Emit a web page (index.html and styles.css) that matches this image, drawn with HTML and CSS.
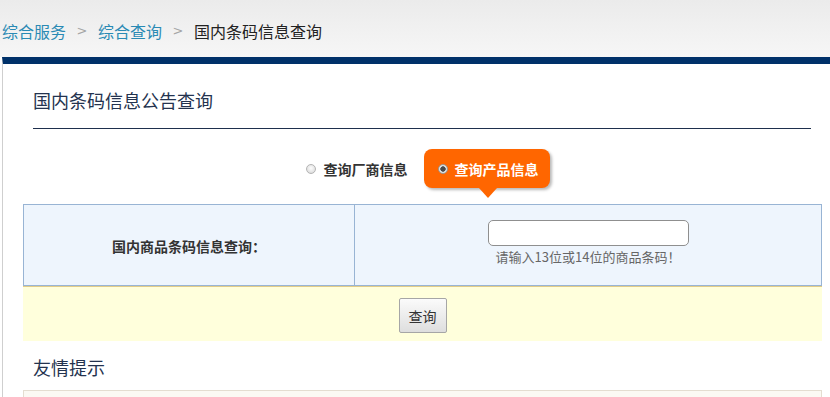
FILE: index.html
```html
<!DOCTYPE html>
<html lang="zh-CN">
<head>
<meta charset="utf-8">
<title>国内条码信息查询</title>
<link rel="stylesheet" href="styles.css">
</head>
<body>
<header class="header">
  <nav class="crumbs">
    <a class="crumb-link" href="#">综合服务</a><span class="sep">&gt;</span><a class="crumb-link" href="#">综合查询</a><span class="sep">&gt;</span><span class="crumb-cur">国内条码信息查询</span>
  </nav>
</header>
<main class="panel">
  <h1 class="title">国内条码信息公告查询</h1>
  <div class="modes">
    <label class="mode"><input class="radio" type="radio" name="mode"><span>查询厂商信息</span></label>
    <label class="mode mode-active"><input class="radio" type="radio" name="mode" checked><span>查询产品信息</span></label>
  </div>
  <div class="form">
    <div class="form-label">国内商品条码信息查询：</div>
    <div class="form-field">
      <input class="code-input" type="text">
      <div class="hint">请输入13位或14位的商品条码！</div>
    </div>
  </div>
  <div class="actions"><button class="btn" type="button">查询</button></div>
  <h2 class="tips-title">友情提示</h2>
  <div class="tips"></div>
</main>
</body>
</html>
```
FILE: styles.css
```css
html, body {
  margin: 0;
  padding: 0;
  overflow: hidden;
  background: #fff;
  font-family: "Noto Sans CJK SC", "Noto Sans", sans-serif;
  color: #333;
}

.header {
  height: 57px;
  background: linear-gradient(#ebebeb, #f6f6f6);
  box-sizing: border-box;
  padding-top: 19px;
}

.crumbs {
  display: flex;
  align-items: center;
  padding-left: 2px;
  height: 24px;
  font-size: 16px;
  line-height: 24px;
  white-space: nowrap;
}

.crumb-link {
  color: #2a8ab4;
  text-decoration: none;
}

.sep {
  display: inline-block;
  width: 32px;
  text-align: center;
  color: #a5a5a5;
  font-size: 13px;
  font-family: "DejaVu Sans", sans-serif;
}

.crumb-cur {
  color: #222;
}

.panel {
  margin-left: 2px;
  width: 860px;
  border-left: 1px solid #cfcfcf;
  border-top: 7px solid #003169;
  background: #fff;
  padding-bottom: 40px;
}

.title {
  margin: 24px 0 0 30px;
  width: 778px;
  padding-bottom: 16px;
  border-bottom: 1px solid #1e2f4d;
  font-size: 18px;
  line-height: 24px;
  font-weight: normal;
  color: #24334f;
}

.modes {
  margin: 20px 0 0 20px;
  width: 799px;
  box-sizing: border-box;
  padding-left: 10px;
  height: 39px;
  display: flex;
  justify-content: center;
  align-items: center;
  gap: 16px;
}

.mode {
  display: flex;
  align-items: center;
  gap: 8px;
  font-size: 14px;
  line-height: 20px;
  font-weight: bold;
  color: #333;
}

.radio {
  appearance: none;
  -webkit-appearance: none;
  margin: 0;
  width: 10px;
  height: 10px;
  border-radius: 50%;
  border: 1px solid #b4b4b4;
  background: radial-gradient(circle at 50% 40%, #fdfdfd, #d4d4d4);
  box-sizing: border-box;
}

.radio:checked {
  background: radial-gradient(circle, #4a4a4a 0 2.4px, #e8e8e8 3px, #cfcfcf 100%);
  border-color: #9a9a9a;
}

.mode-active {
  position: relative;
  height: 39px;
  box-sizing: border-box;
  padding: 0 11px 0 14px;
  gap: 7px;
  background: #ff6600;
  border-radius: 8px;
  color: #fff;
  box-shadow: 2px 2px 3px rgba(0, 0, 0, 0.28);
}

.mode-active::after {
  content: "";
  position: absolute;
  left: 55px;
  bottom: -10px;
  border-left: 9px solid transparent;
  border-right: 9px solid transparent;
  border-top: 10px solid #ff6600;
}

.form {
  margin: 16px 0 0 20px;
  width: 799px;
  height: 82px;
  box-sizing: border-box;
  border: 1px solid #98b4d4;
  background: #eef5fd;
  display: grid;
  grid-template-columns: 331px 1fr;
}

.form-label {
  border-right: 1px solid #98b4d4;
  display: flex;
  align-items: center;
  justify-content: center;
  font-size: 14px;
  font-weight: bold;
  color: #333;
  padding-top: 1px;
}

.form-field {
  display: flex;
  flex-direction: column;
  align-items: center;
  padding-top: 15px;
}

.code-input {
  width: 201px;
  height: 26px;
  box-sizing: border-box;
  border: 1px solid #8f8f8f;
  border-radius: 5px;
  background: #fff;
  margin: 0;
  outline: none;
}

.hint {
  margin-top: 3px;
  font-size: 13px;
  line-height: 16px;
  color: #666;
}

.actions {
  margin-left: 20px;
  width: 799px;
  box-sizing: border-box;
  border-top: 1px solid #e2cc88;
  background: #ffffdc;
  padding: 11px 0 8px;
  display: flex;
  justify-content: center;
}

.btn {
  width: 48px;
  height: 35px;
  margin: 0;
  padding: 0;
  border: 1px solid #a6a6a6;
  border-radius: 2px;
  background: linear-gradient(#fbfbfb, #dedede);
  font-family: "Noto Sans CJK SC", sans-serif;
  font-size: 14px;
  color: #333;
}

.tips-title {
  margin: 14px 0 0 30px;
  font-size: 18px;
  line-height: 24px;
  font-weight: normal;
  color: #24334f;
}

.tips {
  margin: 11px 0 0 20px;
  width: 799px;
  height: 60px;
  box-sizing: border-box;
  border: 1px solid #e4ddd0;
  background: #fbf9f3;
}
```
